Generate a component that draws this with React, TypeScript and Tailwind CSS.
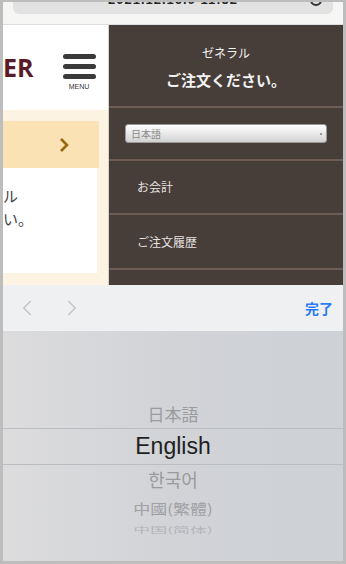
import { ChevronLeft, ChevronRight } from "lucide-react";

const jp = { fontFamily: '"Noto Sans CJK JP", "Noto Sans", sans-serif' };

function TopBar() {
  return (
    <div className="h-[23px] bg-[#f6f6f4] border-b border-[#dedede]">
      <div className="relative mx-[10px] h-[12px] overflow-hidden rounded-b-[6px] bg-[#e2e2e2]">
        <div
          className="absolute left-0 right-0 top-[-10px] text-center text-[13px] font-bold leading-[15px] tracking-[1px] text-[#222]"
          style={{ fontFamily: '"Liberation Sans", sans-serif' }}
        >
          2021.12.16.9 11:52
        </div>
        <div className="absolute right-[11px] top-[-8px] h-[12px] w-[12px] rounded-full border-2 border-[#333]" />
      </div>
    </div>
  );
}

function LeftSide() {
  return (
    <div className="flex w-[105px] flex-col overflow-hidden">
      <div className="flex h-[85px] bg-white">
        <div
          className="mt-[27px] text-[25px] font-bold leading-[30px] text-[#5a1a28]"
          style={{ fontFamily: '"Open Sans", sans-serif' }}
        >
          ER
        </div>
        <div className="ml-[29px] mt-[29px] flex flex-col items-center">
          <div className="flex w-[33px] flex-col gap-[5px]">
            <div className="h-[5px] rounded-full bg-[#3a3a3a]" />
            <div className="h-[5px] rounded-full bg-[#3a3a3a]" />
            <div className="h-[5px] rounded-full bg-[#3a3a3a]" />
          </div>
          <div
            className="mt-[4px] text-[7px] leading-[8px] text-[#333]"
            style={{ fontFamily: '"Liberation Sans", sans-serif' }}
          >
            MENU
          </div>
        </div>
      </div>
      <div className="flex h-[175px] flex-col bg-[#fcf3e2] pt-[11px]">
        <div className="flex h-[47px] w-[96px] items-center justify-end bg-[#fbe2b5] pr-[30px]">
          <svg width="10" height="16" viewBox="0 0 10 16">
            <path d="M2 2 L8 8 L2 14" fill="none" stroke="#9a6810" strokeWidth="2.6" />
          </svg>
        </div>
        <div className="h-[105px] w-[94px] bg-white pt-[16px] text-[15px] leading-[23px] text-[#444]" style={jp}>
          <div>ル</div>
          <div>い。</div>
        </div>
      </div>
    </div>
  );
}

function Divider() {
  return <div className="h-[2px] bg-[#6d5c54]" />;
}

function MenuPanel() {
  return (
    <div className="flex h-[260px] flex-1 flex-col bg-[#473d39]" style={jp}>
      <div className="flex h-[81px] flex-col items-center pt-[20px] text-[#f2f2f2]">
        <div className="text-[12px] leading-[16px]">ゼネラル</div>
        <div className="mt-[10px] text-[15px] font-bold leading-[18px]">ご注文ください。</div>
      </div>
      <Divider />
      <div className="flex h-[51px] items-center px-[16px]">
        <div className="flex h-[19px] w-full items-center justify-between rounded-[3px] border border-[#9a9a9a] bg-gradient-to-b from-[#ffffff] to-[#d2d2d2] pl-[5px] pr-[4px]">
          <span className="text-[10px] leading-[12px] text-[#8a8a8a]">日本語</span>
          <span className="h-[2px] w-[2px] bg-[#999]" />
        </div>
      </div>
      <Divider />
      <div className="flex h-[52px] items-center pl-[28px] text-[12px] text-[#e6e2e0]">お会計</div>
      <Divider />
      <div className="flex h-[53px] items-center pl-[28px] text-[12px] text-[#e6e2e0]">ご注文履歴</div>
      <Divider />
    </div>
  );
}

function Toolbar() {
  return (
    <div className="flex h-[46px] items-center bg-[#eff0f2] pr-[10px]">
      <ChevronLeft className="ml-[11px] h-[26px] w-[26px] text-[#c3c3c7]" strokeWidth={1.3} />
      <ChevronRight className="ml-[19px] h-[26px] w-[26px] text-[#c3c3c7]" strokeWidth={1.3} />
      <div className="ml-auto text-[14px] font-bold text-[#2b7cf4]" style={jp}>
        完了
      </div>
    </div>
  );
}

function Picker() {
  return (
    <div className="h-[230px] bg-gradient-to-r from-[#dcdcdd] via-[#d1d3d7] to-[#ced1d6] pt-[70px]">
      <div className="flex h-[27px] items-center justify-center pb-[2px] text-[17px] text-[#9b9b9d]" style={jp}>
        日本語
      </div>
      <div className="h-px bg-[#b9bcc1]" />
      <div
        className="flex h-[35px] items-center justify-center text-[23px] text-[#1f1f1f]"
        style={{ fontFamily: '"Liberation Sans", sans-serif' }}
      >
        English
      </div>
      <div className="h-px bg-[#b9bcc1]" />
      <div
        className="flex h-[28px] items-center justify-center text-[18px] text-[#9a9a9c]"
        style={{ fontFamily: '"Noto Sans CJK KR", sans-serif' }}
      >
        한국어
      </div>
      <div className="flex h-[30px] items-center justify-center text-[17px] text-[#a0a0a3]" style={jp}>
        <span className="inline-block scale-y-[0.8]">中國(繁體)</span>
      </div>
      <div
        className="flex h-[14px] items-center justify-center text-[17px] text-[#b4b5b8]"
        style={{ fontFamily: '"Noto Sans CJK SC", sans-serif' }}
      >
        <span className="inline-block scale-y-[0.5]">中国(简体)</span>
      </div>
    </div>
  );
}

export default function App() {
  return (
    <div className="h-[564px] w-[346px] bg-[#bdbdbd] px-[3px] pb-[3px] pt-[2px]">
      <div className="flex h-full flex-col overflow-hidden">
        <TopBar />
        <div className="flex">
          <LeftSide />
          <div className="w-px bg-[#d9d2c8]" />
          <MenuPanel />
        </div>
        <Toolbar />
        <Picker />
      </div>
    </div>
  );
}
